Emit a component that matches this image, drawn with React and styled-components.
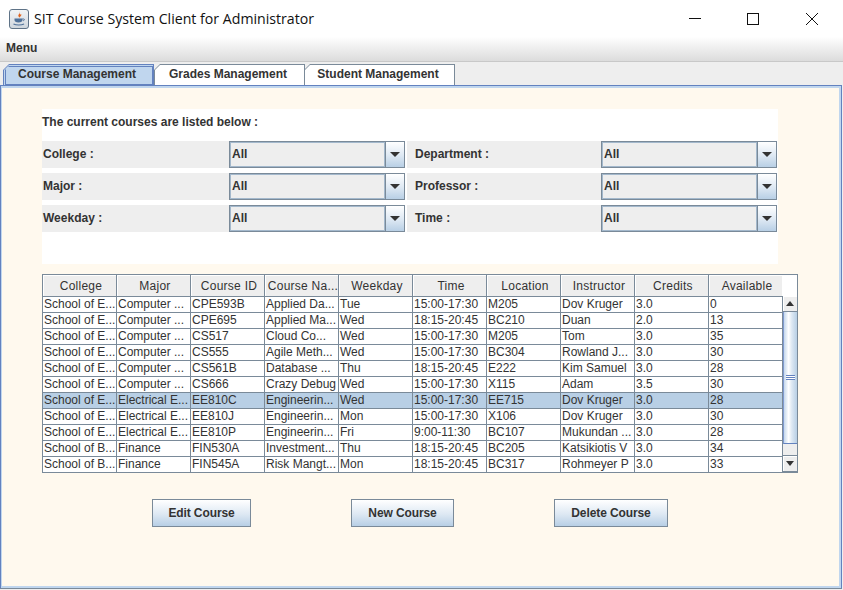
import React from 'react';
import styled, { createGlobalStyle } from 'styled-components';

const GlobalStyle = createGlobalStyle`
  html, body {
    margin: 0;
    padding: 0;
    background: #fff;
  }
  body {
    font-family: "Liberation Sans", Arial, sans-serif;
  }
`;

const Frame = styled.div`
  width: 843px;
  height: 590px;
  display: flex;
  flex-direction: column;
  overflow: hidden;
  background: #eeeeee;
`;

const TitleBar = styled.div`
  height: 37px;
  flex: none;
  display: flex;
  align-items: center;
  background: #fff;
  padding-left: 9px;
`;

const TitleText = styled.div`
  margin-left: 5px;
  font-family: "Open Sans", sans-serif;
  font-size: 14.15px;
  color: #111;
  white-space: nowrap;
`;

const WindowButtons = styled.div`
  margin-left: auto;
  padding-right: 2px;
  display: flex;
`;

const WindowButton = styled.div`
  width: 58.5px;
  height: 37px;
  display: flex;
  align-items: center;
  justify-content: center;
`;

const MenuBar = styled.div`
  height: 25px;
  flex: none;
  box-sizing: border-box;
  display: flex;
  align-items: center;
  padding: 0 0 2px 6px;
  background: linear-gradient(#ffffff, #f4f4f4 30%, #dcdcdc);
  border-bottom: 1px solid #c8c8c8;
  font-size: 12px;
  font-weight: bold;
  color: #333;
`;

const TabStrip = styled.div`
  height: 23px;
  flex: none;
  display: flex;
  align-items: flex-end;
  padding: 0 0 0 3px;
`;

const Tab = styled.div`
  width: ${p => p.$w}px;
  height: 21px;
  margin-right: ${p => (p.$active ? 0 : -1)}px;
  padding: 1px 1px 0 1px;
  box-sizing: border-box;
  background: ${p => (p.$active ? '#6382bf' : '#7a8a99')};
  clip-path: polygon(6px 0, 100% 0, 100% 100%, 0 100%, 0 6px);
`;

const TabFace = styled.div`
  height: 100%;
  box-sizing: border-box;
  display: flex;
  padding: ${p => (p.$active ? '1px 0 0 1px' : '0')};
  background: ${p => (p.$active ? '#c0d6ee' : '#fff')};
  clip-path: polygon(5px 0, 100% 0, 100% 100%, 0 100%, 0 5px);
`;

const TabLabel = styled.div`
  flex: 1;
  box-sizing: border-box;
  display: flex;
  align-items: center;
  justify-content: center;
  padding: 0 3px 2px 0;
  ${p => p.$active && 'border: 1px solid #6382bf; padding: 0 4px 3px 0;'}
  clip-path: polygon(4px 0, 100% 0, 100% 100%, 0 100%, 0 4px);
  font-size: 12px;
  font-weight: bold;
  color: #333;
  white-space: nowrap;
`;

const TabBody = styled.div`
  flex: 1;
  margin-right: 1px;
  border-top: 1px solid #6382bf;
  border-left: 1px solid #6382bf;
  border-right: 1px solid #6382bf;
  border-bottom: 1px solid #7a8a99;
  margin-bottom: 1px;
  background: #c0d6ee;
  padding: 2px 2px 2px 1px;
  display: flex;
  min-height: 0;
`;

const Content = styled.div`
  flex: 1;
  background: #fff9ee;
  padding: 21px 0 0 40px;
`;

const FilterPanel = styled.div`
  width: 736px;
  height: 155px;
  background: #fff;
  box-sizing: border-box;
  padding-top: 6px;
`;

const PanelHeading = styled.div`
  height: 14px;
  line-height: 14px;
  font-size: 12px;
  font-weight: bold;
  color: #333;
  margin-bottom: 12px;
`;

const FilterGrid = styled.div`
  display: grid;
  grid-template-columns: 363px 370px;
  column-gap: 2px;
  row-gap: 5px;
  width: 735px;
`;

const FilterField = styled.div`
  height: 27px;
  display: flex;
  align-items: center;
  background: #eeeeee;
`;

const FilterLabel = styled.div`
  width: ${p => (p.$right ? 194 : 187)}px;
  flex: none;
  padding: 0 0 2px ${p => (p.$right ? 8 : 1)}px;
  box-sizing: border-box;
  font-size: 12px;
  font-weight: bold;
  color: #333;
`;

const Combo = styled.div`
  width: 176px;
  height: 27px;
  box-sizing: border-box;
  display: flex;
  border: 1px solid #7a8a99;
  flex: none;
`;

const ComboValue = styled.div`
  flex: 1;
  display: flex;
  align-items: center;
  padding: 0 0 2px 1px;
  border: 1px solid #a3b8cc;
  font-size: 12px;
  font-weight: bold;
  color: #333;
`;

const ComboArrow = styled.div`
  width: 18px;
  flex: none;
  display: flex;
  align-items: center;
  justify-content: center;
  border-left: 1px solid #7a8a99;
  background: linear-gradient(#ffffff, #dde8f3 55%, #b8cfe5);
`;

const Arrow = styled.div`
  width: 0;
  height: 0;
  border-left: ${p => p.$size}px solid transparent;
  border-right: ${p => p.$size}px solid transparent;
  ${p => (p.$up ? 'border-bottom: 5px solid #333;' : 'border-top: 5px solid #333;')}
`;

const TableWrap = styled.div`
  width: 756px;
  height: 199px;
  margin-top: 10px;
  box-sizing: border-box;
  border: 1px solid #7a8a99;
  border-bottom-width: 2px;
  display: flex;
  background: #fff;
`;

const TableMain = styled.div`
  width: 739px;
  flex: none;
`;

const HeaderRow = styled.div`
  display: grid;
  grid-template-columns: repeat(10, 74px);
  height: 21px;
  background: #eeeeee;
  border-bottom: 1px solid #7a8a99;
`;

const HeaderCell = styled.div`
  display: flex;
  align-items: center;
  justify-content: center;
  padding-left: 3px;
  font-size: 12px;
  letter-spacing: 0.25px;
  color: #333;
  border-right: 1px solid #7a8a99;
  box-shadow: inset 1px 1px 0 #fff;
  white-space: nowrap;
`;

const Row = styled.div`
  display: grid;
  grid-template-columns: repeat(10, 74px);
  height: 16px;
  box-sizing: border-box;
  border-bottom: 1px solid #7a8a99;
  background: ${p => (p.$selected ? '#b8cfe5' : '#fff')};
`;

const Cell = styled.div`
  font-size: 12px;
  line-height: 15px;
  color: #333;
  padding-left: 1px;
  border-right: 1px solid #7a8a99;
  overflow: hidden;
  white-space: nowrap;
`;

const ScrollColumn = styled.div`
  flex: 1;
  display: flex;
  flex-direction: column;
`;

const ScrollCorner = styled.div`
  height: 21px;
  flex: none;
  background: #fff;
`;

const ScrollTrack = styled.div`
  flex: 1;
  display: flex;
  flex-direction: column;
  background: #eeeeee;
  border-left: 1px solid #7a8a99;
`;

const ScrollButton = styled.div`
  height: 16px;
  flex: none;
  display: flex;
  align-items: center;
  justify-content: center;
  box-sizing: border-box;
  background: #eeeeee;
  box-shadow: inset 1px 1px 0 #fff;
  border-${p => (p.$top ? 'bottom' : 'top')}: 1px solid #7a8a99;
`;

const ScrollThumb = styled.div`
  height: 132px;
  flex: none;
  box-sizing: border-box;
  border-left: 1px solid #7f9ad0;
  border-bottom: 1px solid #6382bf;
  display: flex;
  align-items: center;
  justify-content: center;
  background: linear-gradient(90deg, #c4d7ec, #ffffff 35%, #dde8f3 60%, #b8cfe5);
`;

const Grip = styled.div`
  width: 9px;
  height: 5px;
  background: repeating-linear-gradient(#6382bf 0 1px, #fff 1px 2px);
`;

const ScrollGap = styled.div`
  flex: 1;
`;

const ButtonRow = styled.div`
  display: flex;
  margin-top: 26px;
  padding-left: 110px;
`;

const ActionButton = styled.div`
  width: ${p => p.$w}px;
  margin-right: ${p => p.$gap || 0}px;
  height: 28px;
  box-sizing: border-box;
  display: flex;
  align-items: center;
  justify-content: center;
  border: 1px solid #7a8a99;
  background: linear-gradient(#ffffff, #dde8f3 55%, #b8cfe5);
  font-size: 12px;
  font-weight: bold;
  letter-spacing: -0.1px;
  color: #333;
`;

const columns = ['College', 'Major', 'Course ID', 'Course Na...', 'Weekday', 'Time', 'Location', 'Instructor', 'Credits', 'Available'];

const rows = [
  ['School of E...', 'Computer ...', 'CPE593B', 'Applied Da...', 'Tue', '15:00-17:30', 'M205', 'Dov Kruger', '3.0', '0'],
  ['School of E...', 'Computer ...', 'CPE695', 'Applied Ma...', 'Wed', '18:15-20:45', 'BC210', 'Duan', '2.0', '13'],
  ['School of E...', 'Computer ...', 'CS517', 'Cloud Co...', 'Wed', '15:00-17:30', 'M205', 'Tom', '3.0', '35'],
  ['School of E...', 'Computer ...', 'CS555', 'Agile Meth...', 'Wed', '15:00-17:30', 'BC304', 'Rowland J...', '3.0', '30'],
  ['School of E...', 'Computer ...', 'CS561B', 'Database ...', 'Thu', '18:15-20:45', 'E222', 'Kim Samuel', '3.0', '28'],
  ['School of E...', 'Computer ...', 'CS666', 'Crazy Debug', 'Wed', '15:00-17:30', 'X115', 'Adam', '3.5', '30'],
  ['School of E...', 'Electrical E...', 'EE810C', 'Engineerin...', 'Wed', '15:00-17:30', 'EE715', 'Dov Kruger', '3.0', '28'],
  ['School of E...', 'Electrical E...', 'EE810J', 'Engineerin...', 'Mon', '15:00-17:30', 'X106', 'Dov Kruger', '3.0', '30'],
  ['School of E...', 'Electrical E...', 'EE810P', 'Engineerin...', 'Fri', '9:00-11:30', 'BC107', 'Mukundan ...', '3.0', '28'],
  ['School of B...', 'Finance', 'FIN530A', 'Investment...', 'Thu', '18:15-20:45', 'BC205', 'Katsikiotis V', '3.0', '34'],
  ['School of B...', 'Finance', 'FIN545A', 'Risk Mangt...', 'Mon', '18:15-20:45', 'BC317', 'Rohmeyer P', '3.0', '33'],
];

const filters = [
  ['College :', 'Department :'],
  ['Major :', 'Professor :'],
  ['Weekday :', 'Time :'],
];

function JavaIcon() {
  return (
    <svg width="20" height="20" viewBox="0 0 20 20">
      <defs>
        <linearGradient id="javaTile" x1="0" y1="0" x2="0" y2="1">
          <stop offset="0" stopColor="#f2f4f6" />
          <stop offset="1" stopColor="#cfd6dd" />
        </linearGradient>
      </defs>
      <rect x="0.5" y="0.5" width="19" height="19" rx="2.5" fill="url(#javaTile)" stroke="#5f7387" />
      <path d="M10.8 2.5c1.2 1.8-2.4 2.8-1.2 5 .3.6.8.9 1.4 1-.5-.9 2.3-1.8 1-3.5-.2 1-1.4 1-1.2-2.5z" fill="#e0641f" />
      <path d="M5.5 9.5h8V11c0 1.6-1.4 2.5-4 2.5s-4-.9-4-2.5z" fill="#4f7199" />
      <path d="M13.5 10h1.2c1 0 1 1.6-.6 1.7" fill="none" stroke="#4f7199" />
      <path d="M4.5 15c2.5 1.3 8 1.3 10.5 0" fill="none" stroke="#4f7199" strokeWidth="1.2" />
    </svg>
  );
}

function FilterCell({ label, right }) {
  return (
    <FilterField>
      <FilterLabel $right={right}>{label}</FilterLabel>
      <Combo>
        <ComboValue>All</ComboValue>
        <ComboArrow><Arrow $size={5} /></ComboArrow>
      </Combo>
    </FilterField>
  );
}

export default function App() {
  return (
    <Frame>
      <GlobalStyle />
      <TitleBar>
        <JavaIcon />
        <TitleText>SIT Course System Client for Administrator</TitleText>
        <WindowButtons>
          <WindowButton>
            <svg width="12" height="12" viewBox="0 0 12 12"><path d="M0 5.5h12" stroke="#111" /></svg>
          </WindowButton>
          <WindowButton>
            <svg width="12" height="12" viewBox="0 0 12 12"><rect x="0.5" y="0.5" width="11" height="11" fill="none" stroke="#111" /></svg>
          </WindowButton>
          <WindowButton>
            <svg width="12" height="12" viewBox="0 0 12 12"><path d="M0 0l12 12M12 0L0 12" stroke="#111" /></svg>
          </WindowButton>
        </WindowButtons>
      </TitleBar>
      <MenuBar>Menu</MenuBar>
      <TabStrip>
        <Tab $w={151} $active><TabFace $active><TabLabel $active>Course Management</TabLabel></TabFace></Tab>
        <Tab $w={151}><TabFace><TabLabel>Grades Management</TabLabel></TabFace></Tab>
        <Tab $w={151}><TabFace><TabLabel>Student Management</TabLabel></TabFace></Tab>
      </TabStrip>
      <TabBody>
        <Content>
          <FilterPanel>
            <PanelHeading>The current courses are listed below :</PanelHeading>
            <FilterGrid>
              {filters.map(([left, right]) => (
                <React.Fragment key={left}>
                  <FilterCell label={left} />
                  <FilterCell label={right} right />
                </React.Fragment>
              ))}
            </FilterGrid>
          </FilterPanel>
          <TableWrap>
            <TableMain>
              <HeaderRow>
                {columns.map(c => <HeaderCell key={c}>{c}</HeaderCell>)}
              </HeaderRow>
              {rows.map((r, i) => (
                <Row key={r[2]} $selected={i === 6}>
                  {r.map((v, j) => <Cell key={j}>{v}</Cell>)}
                </Row>
              ))}
            </TableMain>
            <ScrollColumn>
              <ScrollCorner />
              <ScrollTrack>
                <ScrollButton $top><Arrow $up $size={4.5} /></ScrollButton>
                <ScrollThumb><Grip /></ScrollThumb>
                <ScrollGap />
                <ScrollButton><Arrow $size={4.5} /></ScrollButton>
              </ScrollTrack>
            </ScrollColumn>
          </TableWrap>
          <ButtonRow>
            <ActionButton $w={99} $gap={100}>Edit Course</ActionButton>
            <ActionButton $w={103} $gap={100}>New Course</ActionButton>
            <ActionButton $w={114}>Delete Course</ActionButton>
          </ButtonRow>
        </Content>
      </TabBody>
    </Frame>
  );
}
